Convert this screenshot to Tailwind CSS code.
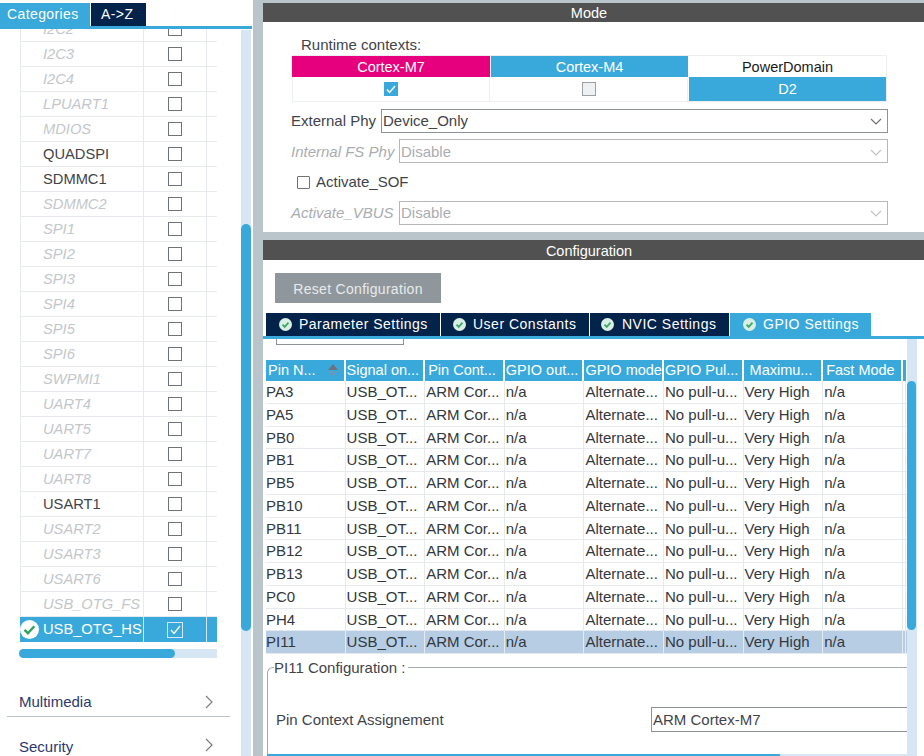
<!DOCTYPE html>
<html lang="en">
<head>
  <meta charset="UTF-8" />
  <title>Pinout &amp; Configuration</title>
  <script src="https://cdn.jsdelivr.net/npm/@tailwindcss/browser@4"></script>
</head>
<body class="bg-white font-['Liberation_Sans',Arial,sans-serif] text-[15px] text-[#3f444a] overflow-hidden">
  <div class="flex w-[924px] h-[756px] overflow-hidden">

    <!-- Left: peripheral list -->
    <aside class="relative w-[253px] h-[756px] shrink-0 bg-white overflow-hidden">
      <div class="flex h-[26px] pt-[3px] text-[14px]">
        <div class="w-[90px] bg-[#39a9dc] text-white tracking-[0.4px] flex items-center pl-[7px]">Categories</div>
        <div class="w-[55px] ml-[1px] bg-[#03234b] text-white flex items-center pl-[10px] tracking-[0.4px]">A-&gt;Z</div>
      </div>
      <div class="h-[3px] w-[252px] bg-[#39a9dc]"></div>

      <div class="ml-[20px] w-[197px] h-[613px] overflow-hidden">
        <div id="periph" class="-mt-[12px]"></div>
      </div>

      <!-- horizontal scrollbar of the list -->
      <div class="ml-[19px] mt-[7px] w-[198px] h-[9px] bg-[#d6e6f4] rounded-l-full">
        <div class="w-[156px] h-[9px] bg-[#39a9dc] rounded-full"></div>
      </div>

      <div class="mt-[33px] ml-[7px] w-[223px] h-[26px] pb-[2px] border-b border-[#b9c5cb] flex items-center justify-between pl-[12px] pr-[16px] text-[#2c3a6b]">
        <span>Multimedia</span>
        <svg class="-mt-[2px]" width="9" height="14" viewBox="0 0 9 14" fill="none" stroke="#7a7f84" stroke-width="1.2"><path d="M1 1l6 6-6 6"/></svg>
      </div>
      <div class="mt-[19px] ml-[7px] w-[223px] h-[23px] flex items-center justify-between pl-[12px] pr-[16px] text-[#2c3a6b]">
        <span>Security</span>
        <svg class="-mt-[6px]" width="9" height="14" viewBox="0 0 9 14" fill="none" stroke="#7a7f84" stroke-width="1.2"><path d="M1 1l6 6-6 6"/></svg>
      </div>

      <!-- vertical scrollbar of the panel -->
      <div class="absolute left-[241px] top-[30px] w-[10px] h-[726px] bg-[#d6e6f4]">
        <div class="absolute top-[194px] w-[10px] h-[407px] bg-[#39a9dc] rounded-full"></div>
      </div>
    </aside>

    <!-- Right: mode and configuration -->
    <main class="flex-1 min-w-0 bg-[#b9c5cb] pl-[10px] pt-[3px] flex flex-col">
      <section class="h-[229px] bg-white shrink-0">
        <div class="h-[19px] bg-[#505150] text-white text-center leading-[20px] text-[14.5px] pr-[9px]">Mode</div>
        <div class="pl-[28px] pr-[37px]">
          <div class="pl-[10px] h-[33px] pt-[14px] leading-[18px]">Runtime contexts:</div>
          <div class="ml-px grid grid-cols-[198px_198px_1fr] h-[47px] w-[595px] border-y border-r border-[#eceff2] text-center text-[14.5px]">
            <div class="h-[21px] leading-[22px] bg-[#e6007e] text-white">Cortex-M7</div>
            <div class="h-[21px] leading-[22px] bg-[#39a9dc] text-white ml-px">Cortex-M4</div>
            <div class="h-[21px] leading-[22px] text-[#1a1a1a] ml-px">PowerDomain</div>
            <div class="flex items-center justify-center border-x border-[#eceff2]">
              <span class="w-[14px] h-[14px] bg-[#39a9dc] flex items-center justify-center"><svg width="10" height="9" viewBox="0 0 10 9" fill="none" stroke="#fff" stroke-width="1.4"><path d="M1 4.5l2.6 3L9 1"/></svg></span>
            </div>
            <div class="flex items-center justify-center border-r border-[#eceff2]">
              <span class="w-[14px] h-[14px] bg-[#eef0f2] border border-[#9aa0a5]"></span>
            </div>
            <div class="bg-[#39a9dc] text-white text-center ml-px h-[24px] leading-[25px]">D2</div>
          </div>
          <div class="flex items-center w-[597px] h-[24px] mt-[7px]">
            <span class="w-[90px] shrink-0">External Phy</span>
            <div class="flex-1 h-[24px] border border-[#8d9298] flex items-center justify-between pl-[1px] pr-[5px]">
              <span>Device_Only</span>
              <svg width="12" height="7" viewBox="0 0 12 7" fill="none" stroke="#6b7075" stroke-width="1.2"><path d="M1 1l5 5 5-5"/></svg>
            </div>
          </div>
          <div class="flex items-center w-[597px] h-[24px] mt-[6px]">
            <span class="w-[108px] shrink-0 italic text-[#a9adb1] whitespace-nowrap pt-[2px]">Internal FS Phy</span>
            <div class="flex-1 h-[24px] border border-[#b4b8bc] flex items-center justify-between pl-[1px] pr-[5px] pt-[2px] text-[#a9adb1]">
              <span>Disable</span>
              <svg width="12" height="7" viewBox="0 0 12 7" fill="none" stroke="#c0c4c8" stroke-width="1.2"><path d="M1 1l5 5 5-5"/></svg>
            </div>
          </div>
          <div class="flex items-center h-[24px] mt-[7px] pl-[6px]">
            <span class="w-[13px] h-[13px] border border-[#6e7378] rounded-[1px]"></span>
            <span class="ml-[6px]">Activate_SOF</span>
          </div>
          <div class="flex items-center w-[597px] h-[24px] mt-[7px]">
            <span class="w-[108px] shrink-0 italic text-[#a9adb1] whitespace-nowrap">Activate_VBUS</span>
            <div class="flex-1 h-[24px] border border-[#b4b8bc] flex items-center justify-between pl-[1px] pr-[5px] text-[#a9adb1]">
              <span>Disable</span>
              <svg width="12" height="7" viewBox="0 0 12 7" fill="none" stroke="#c0c4c8" stroke-width="1.2"><path d="M1 1l5 5 5-5"/></svg>
            </div>
          </div>
        </div>
      </section>

      <section class="relative mt-[8px] flex-1 min-h-0 bg-white overflow-hidden">
        <div class="h-[20px] bg-[#505150] text-white text-center leading-[22px] text-[14.5px] pr-[9px]">Configuration</div>
        <div class="ml-[12px] mt-[13px] w-[166px] h-[30px] pt-[2px] bg-[#8f979c] text-[#e8eaec] text-[14px] flex items-center justify-center tracking-[0.3px]">Reset Configuration</div>

        <div class="flex pl-[3px] mt-[10px] h-[23px] gap-px text-white text-[14px] tracking-[0.5px] whitespace-nowrap">
          <div class="w-[174px] bg-[#03234b] flex items-center pl-[13px] gap-[7px]">
            <svg width="13" height="13" viewBox="0 0 13 13"><circle cx="6.5" cy="6.5" r="6.5" fill="#d9efe3"/><path d="M3.5 6.7l2.2 2.2 3.8-4.3" fill="none" stroke="#3fa66b" stroke-width="1.8"/></svg>Parameter Settings</div>
          <div class="w-[148px] bg-[#03234b] flex items-center pl-[12px] gap-[7px]">
            <svg width="13" height="13" viewBox="0 0 13 13"><circle cx="6.5" cy="6.5" r="6.5" fill="#d9efe3"/><path d="M3.5 6.7l2.2 2.2 3.8-4.3" fill="none" stroke="#3fa66b" stroke-width="1.8"/></svg>User Constants</div>
          <div class="w-[139px] bg-[#03234b] flex items-center pl-[11px] gap-[8px]">
            <svg width="13" height="13" viewBox="0 0 13 13"><circle cx="6.5" cy="6.5" r="6.5" fill="#d9efe3"/><path d="M3.5 6.7l2.2 2.2 3.8-4.3" fill="none" stroke="#3fa66b" stroke-width="1.8"/></svg>NVIC Settings</div>
          <div class="w-[141px] bg-[#39a9dc] flex items-center pl-[13px] gap-[7px]">
            <svg width="13" height="13" viewBox="0 0 13 13"><circle cx="6.5" cy="6.5" r="6.5" fill="#d9efe3"/><path d="M3.5 6.7l2.2 2.2 3.8-4.3" fill="none" stroke="#3fa66b" stroke-width="1.8"/></svg>GPIO Settings</div>
        </div>
        <div class="h-[3px] bg-[#39a9dc]"></div>

        <!-- scrolled away search box -->
        <div class="ml-[13px] w-[128px] h-[6px] border border-t-0 border-[#8d9298]"></div>

        <div class="pl-[3px] mt-[15px]">
          <div class="flex h-[21px] gap-[2px] w-[641px] overflow-hidden text-white text-[14.5px] whitespace-nowrap leading-[21px]">
            <div class="relative w-[77.6px] shrink-0 bg-[#39a9dc] pl-[2px]">Pin N...
              <svg class="absolute right-[6px] top-[4px]" width="10" height="13" viewBox="0 0 10 13"><path d="M5 0l5 6H0z" fill="#6d7280"/><path d="M5 13L0 7h10z" fill="#5f9cc0"/></svg>
            </div>
            <div class="w-[77.6px] shrink-0 bg-[#39a9dc] pl-[1px]">Signal on...</div>
            <div class="w-[77.6px] shrink-0 bg-[#39a9dc] pl-[3px]">Pin Cont...</div>
            <div class="w-[77.6px] shrink-0 bg-[#39a9dc] pl-[1px]">GPIO out...</div>
            <div class="w-[77.6px] shrink-0 bg-[#39a9dc] pl-[1px] overflow-hidden">GPIO mode</div>
            <div class="w-[77.6px] shrink-0 bg-[#39a9dc] pl-[1px] overflow-hidden">GPIO Pul...</div>
            <div class="w-[77.6px] shrink-0 bg-[#39a9dc] pl-[6px]">Maximu...</div>
            <div class="w-[77.6px] shrink-0 bg-[#39a9dc] pl-[3px]">Fast Mode</div>
            <div class="w-[3px] shrink-0 bg-[#39a9dc]"></div>
          </div>
          <div id="pins" class="w-[641px]"></div>
        </div>

        <!-- selected pin -->
        <div class="relative ml-[4px] mt-[13px] w-[640px] h-[120px] border-l border-t border-[#a5abb0] rounded-tl-[6px]">
          <span class="absolute -top-[9px] left-[6px] bg-white pr-[3px] leading-[18px]">PI11 Configuration :</span>
          <div class="flex items-center mt-[39px] ml-[8px]">
            <span class="w-[375px] shrink-0 pt-[2px]">Pin Context Assignement</span>
            <div class="flex-1 h-[25px] border border-[#8d9298] border-r-0 flex items-center pl-[1px] pt-[2px]">ARM Cortex-M7</div>
          </div>
        </div>

        <div class="absolute left-[4px] top-[514px] w-[640px] h-[2px] bg-[#d6e6f4]">
          <div class="w-[513px] h-[2px] bg-[#39a9dc]"></div>
        </div>

        <!-- vertical scrollbar of the tab -->
        <div class="absolute left-[644px] top-[99px] w-[10px] h-[417px] bg-[#d6e6f4]">
          <div class="absolute top-[42px] w-[9px] h-[249px] bg-[#39a9dc] rounded-full"></div>
        </div>
      </section>
    </main>
  </div>

  <script>
    const periph = [
      ['I2C2', 0], ['I2C3', 0], ['I2C4', 0], ['LPUART1', 0], ['MDIOS', 0], ['QUADSPI', 1], ['SDMMC1', 1],
      ['SDMMC2', 0], ['SPI1', 0], ['SPI2', 0], ['SPI3', 0], ['SPI4', 0], ['SPI5', 0], ['SPI6', 0],
      ['SWPMI1', 0], ['UART4', 0], ['UART5', 0], ['UART7', 0], ['UART8', 0], ['USART1', 1], ['USART2', 0],
      ['USART3', 0], ['USART6', 0], ['USB_OTG_FS', 0]
    ];
    let html = '';
    for (const [name, on] of periph) {
      const text = on ? 'text-[#3f444a]' : 'italic text-[#c3c7cb]';
      html += `<div class="flex h-[25px] border-b border-[#e6eaef]">
        <div class="w-[124px] shrink-0 border-x border-[#e6eaef] pl-[22px] text-[14.7px] leading-[24px] whitespace-nowrap overflow-hidden ${text}">${name}</div>
        <div class="w-[63px] shrink-0 border-r border-[#e6eaef] flex items-center justify-center"><span class="w-[14px] h-[14px] border-[1.5px] border-[#6e7378]"></span></div>
      </div>`;
    }
    html += `<div class="flex h-[25px] bg-[#39a9dc] text-white">
      <div class="relative w-[124px] shrink-0 border-r border-[#d6e6f4] pl-[23px] text-[14.7px] leading-[24px] whitespace-nowrap overflow-hidden">
        <svg class="absolute left-0 top-[3px]" width="19" height="19" viewBox="0 0 19 19"><circle cx="9.5" cy="9.5" r="9.5" fill="#fff"/><path d="M4.5 9.8l3.4 3.4 6.4-7" fill="none" stroke="#2fa35f" stroke-width="2.4"/></svg>USB_OTG_HS</div>
      <div class="w-[63px] shrink-0 border-r border-[#d6e6f4] flex items-center justify-center"><span class="w-[16px] h-[16px] border border-[#d6e6f4] flex items-center justify-center"><svg width="11" height="10" viewBox="0 0 11 10" fill="none" stroke="#fff" stroke-width="1.4"><path d="M1 5l3 3.5L10 1"/></svg></span></div>
    </div>`;
    document.getElementById('periph').innerHTML = html;

    const pins = ['PA3', 'PA5', 'PB0', 'PB1', 'PB5', 'PB10', 'PB11', 'PB12', 'PB13', 'PC0', 'PH4', 'PI11'];
    const vals = ['USB_OT...', 'ARM Cor...', 'n/a', 'Alternate...', 'No pull-u...', 'Very High', 'n/a', ''];
    let rows = '';
    pins.forEach((pin, i) => {
      const bg = i === pins.length - 1 ? 'bg-[#b6cde4]' : 'bg-white';
      rows += `<div class="flex h-[22.75px] border-b border-[#e6eaef] text-[#33383d] ${bg}">
        <div class="w-[79.6px] shrink-0 leading-[22px] border-r border-[#e6eaef]">${pin}</div>
        ${vals.map((v, j) => `<div class="${j === 7 ? 'w-[3px]' : 'w-[79.6px]'} shrink-0 pl-[1px] leading-[22px] border-r border-[#e6eaef] whitespace-nowrap overflow-hidden">${v}</div>`).join('')}
      </div>`;
    });
    document.getElementById('pins').innerHTML = rows;
  </script>
</body>
</html>
